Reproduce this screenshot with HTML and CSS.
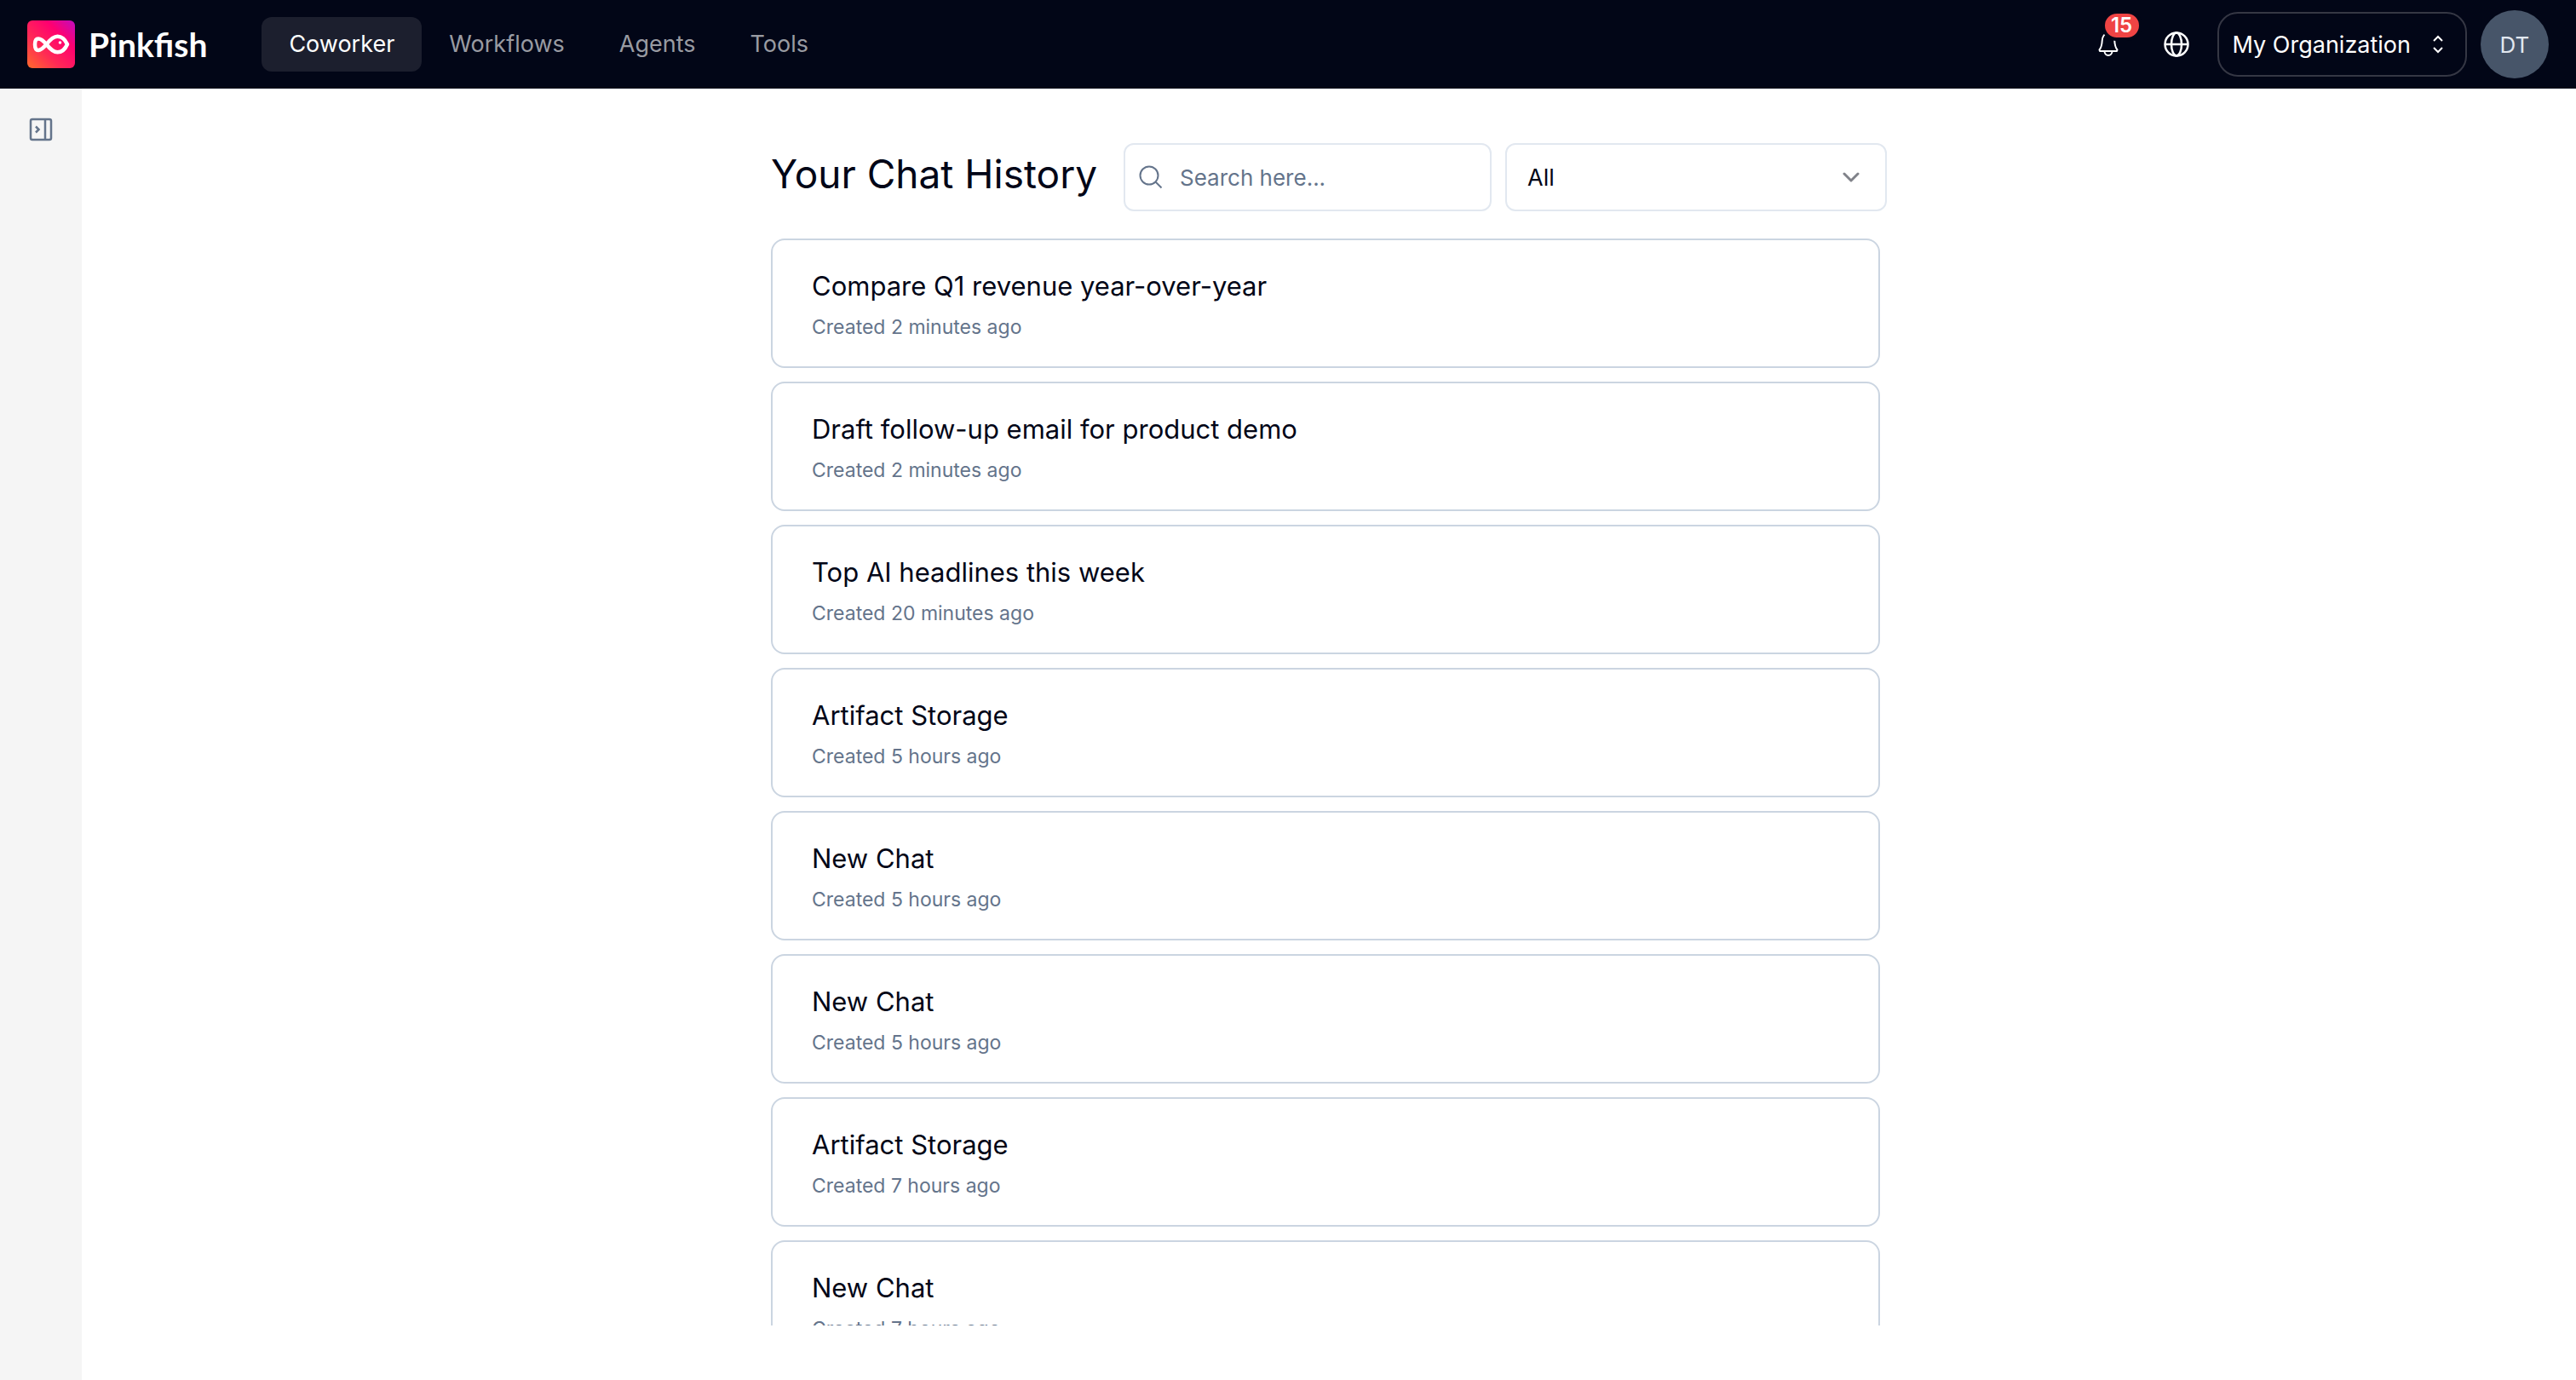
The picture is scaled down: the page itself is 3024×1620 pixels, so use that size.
FILE: index.html
```
<!DOCTYPE html>
<html lang="en">
<head>
  <meta charset="UTF-8" />
  <meta name="viewport" content="width=device-width, initial-scale=1.0" />
  <title>Pinkfish - Chat History</title>
  <link rel="stylesheet" href="styles.css">
</head>
<body>
  <header class="topbar">
    <a class="brand" href="#">
      <svg class="brand-logo" viewBox="0 0 56 56" aria-hidden="true">
        <defs>
          <linearGradient id="logoFill" x1="0" y1="1" x2="1" y2="0">
            <stop offset="0" stop-color="#ff6b2c" />
            <stop offset="0.35" stop-color="#ff2a55" />
            <stop offset="0.7" stop-color="#ff0070" />
            <stop offset="1" stop-color="#c00cc0" />
          </linearGradient>
        </defs>
        <rect width="56" height="56" rx="6" fill="url(#logoFill)" />
        <path d="M22.5 28C26 23.5 30 18.7 35.5 18.7C41 18.7 45 23.5 47 28C45 32.5 41 37.3 35.5 37.3C30 37.3 26 32.5 22.5 28C19.5 24.5 16.5 21.5 13 21.5C10 21.5 9 24.5 9 28C9 31.5 10 35 13 35C16.5 35 19.5 31.5 22.5 28Z" fill="none" stroke="#fff" stroke-width="4.5" stroke-linejoin="round" />
        <circle cx="38.5" cy="26" r="1.8" fill="#fff" />
      </svg>
      <span class="brand-name">Pinkfish</span>
    </a>

    <nav class="nav">
      <a class="nav-link active" href="#">Coworker</a>
      <a class="nav-link" href="#">Workflows</a>
      <a class="nav-link" href="#">Agents</a>
      <a class="nav-link" href="#">Tools</a>
    </nav>

    <div class="actions">
      <button class="icon-btn bell" type="button" aria-label="Notifications">
        <svg width="32" height="32" viewBox="0 0 32 32" fill="none" stroke="currentColor" stroke-width="2" stroke-linejoin="round">
          <path d="M16 3C11.5 3 9 7 8.7 12C8.5 16.500 8 19.5 5.500 22.5L6 24H26L26.500 22.5C24 19.5 23.5 16.500 23.3 12C23 7 20.5 3 16 3Z" />
          <path d="M11.5 24C11.5 27 13.5 29 16 29C18.5 29 20.5 27 20.5 24" />
        </svg>
        <span class="badge">15</span>
      </button>
      <button class="icon-btn" type="button" aria-label="Language">
        <svg width="32" height="32" viewBox="0 0 32 32" fill="none" stroke="currentColor" stroke-width="2.5">
          <circle cx="16" cy="16" r="13.5" />
          <ellipse cx="16" cy="16" rx="6" ry="13.5" />
          <path d="M2.5 16H29.5" />
        </svg>
      </button>
      <button class="org" type="button">
        <span>My Organization</span>
        <svg width="12" height="22" viewBox="0 0 12 22" fill="none" stroke="currentColor" stroke-width="2">
          <path d="M1 7L6 2L11 7" />
          <path d="M1 15L6 20L11 15" />
        </svg>
      </button>
      <button class="avatar" type="button" aria-label="Account">DT</button>
    </div>
  </header>

  <div class="layout">
    <aside class="sidebar">
      <button class="sidebar-toggle" type="button" aria-label="Open sidebar">
        <svg width="32" height="32" viewBox="0 0 32 32" fill="none" stroke="currentColor" stroke-width="2.5">
          <rect x="4" y="4" width="24" height="24" rx="2" />
          <path d="M21 4V28" />
          <path d="M10 12.5L13.5 16L10 19.5" />
        </svg>
      </button>
    </aside>

    <main class="content">
      <section class="history">
        <div class="toolbar">
          <h1>Your Chat History</h1>
          <div class="search">
            <svg width="28" height="28" viewBox="0 0 28 28" fill="none" stroke="currentColor" stroke-width="2">
              <circle cx="12" cy="12" r="10.5" />
              <path d="M19.5 19.5L26.5 26.5" />
            </svg>
            <input type="text" aria-label="Search chats" placeholder="Search here..." />
          </div>
          <div class="filter">
            <select aria-label="Filter chats">
              <option>All</option>
            </select>
            <svg width="20" height="12" viewBox="0 0 20 12" fill="none" stroke="currentColor" stroke-width="3" stroke-linecap="round" stroke-linejoin="round">
              <path d="M2 2L10 10L18 2" />
            </svg>
          </div>
        </div>

        <div class="chats">
          <a class="chat" href="#">
            <h2>Compare Q1 revenue year-over-year</h2>
            <p>Created 2 minutes ago</p>
          </a>
          <a class="chat" href="#">
            <h2>Draft follow-up email for product demo</h2>
            <p>Created 2 minutes ago</p>
          </a>
          <a class="chat" href="#">
            <h2>Top AI headlines this week</h2>
            <p>Created 20 minutes ago</p>
          </a>
          <a class="chat" href="#">
            <h2>Artifact Storage</h2>
            <p>Created 5 hours ago</p>
          </a>
          <a class="chat" href="#">
            <h2>New Chat</h2>
            <p>Created 5 hours ago</p>
          </a>
          <a class="chat" href="#">
            <h2>New Chat</h2>
            <p>Created 5 hours ago</p>
          </a>
          <a class="chat" href="#">
            <h2>Artifact Storage</h2>
            <p>Created 7 hours ago</p>
          </a>
          <a class="chat" href="#">
            <h2>New Chat</h2>
            <p>Created 7 hours ago</p>
          </a>
        </div>
      </section>
    </main>
  </div>
</body>
</html>
```
FILE: styles.css
```
* {
  box-sizing: border-box;
}

body {
  margin: 0;
  height: 100vh;
  display: flex;
  flex-direction: column;
  font-family: Inter, "Liberation Sans", sans-serif;
  font-size: 27px;
  color: #020617;
  background: #fff;
}

h1, h2, p {
  margin: 0;
  font-weight: 400;
}

a {
  color: inherit;
  text-decoration: none;
}

button, input, select {
  font: inherit;
  color: inherit;
}

button {
  padding: 0;
  border: none;
  background: none;
  cursor: pointer;
}

svg {
  display: block;
  flex: none;
}

/* top bar */
.topbar {
  flex: none;
  display: flex;
  align-items: center;
  height: 104px;
  padding: 0 32px;
  background: #020617;
  color: #fff;
}

.brand {
  display: flex;
  align-items: center;
  gap: 16px;
}

.brand-logo {
  width: 56px;
  height: 56px;
}

.brand-name {
  font-family: Lato, sans-serif;
  font-size: 39px;
  font-weight: 700;
}

.nav {
  display: flex;
  margin-left: 64px;
}

.nav-link {
  padding: 0 32px;
  line-height: 64px;
  border-radius: 12px;
  color: #999ba2;
}

.nav-link.active {
  background: #1c1f2e;
  color: #fff;
}

.actions {
  display: flex;
  align-items: center;
  gap: 16px;
  margin-left: auto;
}

.icon-btn {
  display: flex;
  align-items: center;
  justify-content: center;
  width: 64px;
  height: 64px;
}

.bell {
  position: relative;
}

.badge {
  position: absolute;
  top: -8px;
  right: -8px;
  width: 48px;
  height: 36px;
  border: 4px solid #020617;
  border-radius: 18px;
  background: #ef4444;
  font-size: 24px;
  font-weight: 600;
  line-height: 28px;
  text-align: center;
}

.org {
  display: flex;
  align-items: center;
  gap: 26px;
  height: 76px;
  padding: 0 26px 0 16px;
  border: 2px solid #353744;
  border-radius: 24px;
}

.avatar {
  width: 80px;
  height: 80px;
  border-radius: 50%;
  background: #475569;
  color: #e2e8f0;
  font-size: 26px;
}

/* page body */
.layout {
  flex: 1;
  display: flex;
  min-height: 0;
}

.sidebar {
  width: 96px;
  padding-top: 32px;
  background: #f5f5f5;
}

.sidebar-toggle {
  display: block;
  margin: 0 auto;
  color: #64748b;
}

.content {
  flex: 1;
  display: flex;
  justify-content: center;
  padding: 64px 32px;
}

.history {
  display: flex;
  flex-direction: column;
  gap: 32px;
  width: 100%;
  max-width: 1310px;
}

.toolbar {
  display: flex;
  gap: 16px;
}

.toolbar h1 {
  flex: 1;
  font-size: 46px;
  line-height: 72px;
  white-space: nowrap;
}

.search {
  display: flex;
  align-items: center;
  gap: 20px;
  width: 432px;
  height: 80px;
  padding: 0 16px;
  border: 2px solid #e2e8f0;
  border-radius: 12px;
  color: #64748b;
}

.search input {
  flex: 1;
  min-width: 0;
  padding: 0;
  border: none;
  outline: none;
  background: none;
  font-size: 26px;
  color: #020617;
}

.search input::placeholder {
  color: #64748b;
}

.filter {
  position: relative;
  width: 448px;
  height: 80px;
}

.filter select {
  width: 100%;
  height: 100%;
  padding: 0 24px;
  border: 2px solid #e2e8f0;
  border-radius: 12px;
  background: #fff;
  appearance: none;
}

.filter svg {
  position: absolute;
  top: 34px;
  right: 32px;
  color: #808289;
  pointer-events: none;
}

/* the list runs past the bottom and is clipped there */
.chats {
  flex: 1;
  min-height: 0;
  display: flex;
  flex-direction: column;
  gap: 16px;
  padding-right: 8px;
  overflow: hidden;
}

.chat {
  flex: none;
  padding: 34px 46px 30px;
  border: 2px solid #cbd5e1;
  border-radius: 16px;
}

.chat h2 {
  font-size: 31px;
  line-height: 40px;
}

.chat p {
  margin-top: 12px;
  font-size: 23px;
  line-height: 32px;
  color: #64748b;
}
```
